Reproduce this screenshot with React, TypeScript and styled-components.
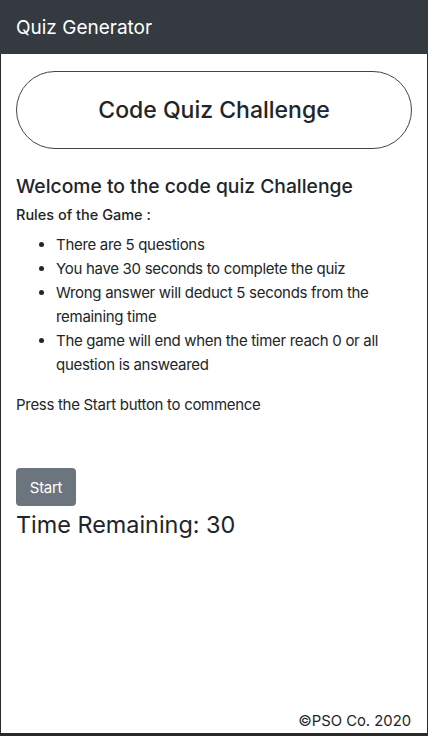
import React from "react";
import styled, { createGlobalStyle } from "styled-components";

const Global = createGlobalStyle`
  html, body { margin: 0; padding: 0; background: #fff; }
  body { font-family: Inter, "Noto Sans", sans-serif; color: #212529; }
  * { box-sizing: border-box; }
`;

const Frame = styled.div`
  min-height: 736px;
  display: flex;
  flex-direction: column;
  border-left: 1px solid #2a2a2a;
  border-right: 1px solid #2a2a2a;
  border-bottom: 3px solid #2a2a2a;
`;

const NavBar = styled.header`
  height: 54px;
  background: #343a40;
  color: #fff;
  display: flex;
  align-items: center;
  padding: 0 16px;
  margin: 0 -1px;
  font-size: 19px;
  font-weight: 400;
`;

const Main = styled.main`
  padding: 17px 15px 0;
  display: flex;
  flex-direction: column;
`;

const TitlePill = styled.div`
  height: 78px;
  border: 1px solid #444;
  border-radius: 40px;
  display: flex;
  align-items: center;
  justify-content: center;
  font-size: 23px;
  font-weight: 500;
  color: #212529;
`;

const Welcome = styled.h2`
  margin: 25px 0 0;
  font-size: 19.3px;
  font-weight: 500;
  line-height: 24px;
`;

const RulesTitle = styled.p`
  margin: 7px 0 0;
  font-size: 14.5px;
  font-weight: 500;
  line-height: 20px;
`;

const RuleList = styled.ul`
  margin: 8px 0 0;
  padding-left: 40px;
  font-size: 15px;
  line-height: 24px;
  letter-spacing: -0.3px;
`;

const Rule = styled.li``;

const Prompt = styled.p`
  margin: 16px 0 0;
  font-size: 15px;
  line-height: 24px;
  letter-spacing: -0.3px;
`;

const StartButton = styled.button`
  align-self: flex-start;
  margin-top: 51px;
  width: 60px;
  height: 38px;
  background: #6c757d;
  color: #fff;
  border: none;
  border-radius: 4px;
  font-family: inherit;
  font-size: 15px;
  letter-spacing: -0.3px;
  padding: 0;
`;

const Timer = styled.h3`
  margin: 3px 0 0;
  font-size: 23.4px;
  font-weight: 400;
  line-height: 32px;
`;

const Footer = styled.footer`
  margin-top: auto;
  padding: 0 16px 0;
  text-align: right;
  font-size: 14.8px;
  line-height: 24px;
  color: #212529;
`;

export default function App() {
  return (
    <>
      <Global />
      <Frame>
        <NavBar>Quiz Generator</NavBar>
        <Main>
          <TitlePill>Code Quiz Challenge</TitlePill>
          <Welcome>Welcome to the code quiz Challenge</Welcome>
          <RulesTitle>Rules of the Game :</RulesTitle>
          <RuleList>
            <Rule>There are 5 questions</Rule>
            <Rule>You have 30 seconds to complete the quiz</Rule>
            <Rule>Wrong answer will deduct 5 seconds from the remaining time</Rule>
            <Rule>The game will end when the timer reach 0 or all question is answeared</Rule>
          </RuleList>
          <Prompt>Press the Start button to commence</Prompt>
          <StartButton>Start</StartButton>
          <Timer>Time Remaining: 30</Timer>
        </Main>
        <Footer>©PSO Co. 2020</Footer>
      </Frame>
    </>
  );
}
